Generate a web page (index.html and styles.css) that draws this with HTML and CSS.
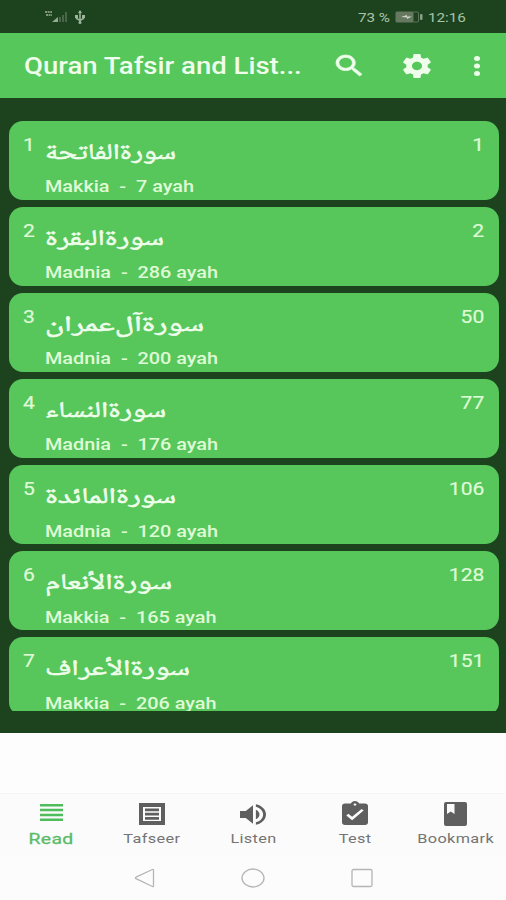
FILE: index.html
```html
<!DOCTYPE html>
<html lang="en">
<head>
<meta charset="utf-8">
<title>Quran Tafsir and Listen</title>
<link rel="stylesheet" href="styles.css">
</head>
<body>
<div class="status">
  <svg class="signal" width="44" height="16" viewBox="0 0 44 16">
    <path d="M1 3h7M2 6h6" stroke="#7f967c" stroke-width="2" stroke-dasharray="2 .6"/>
    <path d="M8 13l6-5v5z" fill="#96aa92"/>
    <path d="M16 13V8M19 13V6M22 13V3" stroke="#49664a" stroke-width="2"/>
    <path d="M36 2v12M32.500 6v3.500l3.500 2 3.500-2V6" fill="none" stroke="#9db59c" stroke-width="1.500"/>
    <path d="M36 1l2 3h-4zM31 6h3v3h-3zM38 6h3v3h-3z" fill="#9db59c"/><circle cx="36" cy="13.500" r="1.500" fill="#9db59c"/>
  </svg>
  <div class="status-right">
    <span class="pct wide">73 %</span>
    <svg class="battery" width="29" height="12" viewBox="0 0 29 12">
      <rect x=".5" y=".5" width="18" height="11" rx="1.500" fill="#66785f"/>
      <path d="M18 1h4.500q1 0 1 1v8q0 1-1 1H18" fill="none" stroke="#5d755a"/>
      <rect x="25" y="3" width="2.500" height="6" rx="1" fill="#8aa086"/>
      <path d="M6 6l6-2v1.500h5L12 8V6.500z" fill="#ccd8c8"/>
    </svg>
    <span class="clock wide">12:16</span>
  </div>
</div>
<header class="bar">
  <h1 class="wide">Quran Tafsir and List...</h1>
  <svg class="i-search" viewBox="3 3 17.500 17.500" preserveAspectRatio="none"><path d="M15.500 14h-.79l-.28-.27C15.410 12.590 16 11.110 16 9.500 16 5.910 13.090 3 9.500 3S3 5.910 3 9.500 5.910 16 9.500 16c1.610 0 3.090-.59 4.230-1.570l.27.28v.79l5 4.990L20.490 19l-4.990-5zm-6 0C7.010 14 5 11.990 5 9.500S7.010 5 9.500 5 14 7.010 14 9.500 11.990 14 9.500 14z"/></svg>
  <svg class="i-gear" viewBox="2.200 2 19.600 20" preserveAspectRatio="none"><path d="M19.430 12.980c.04-.32.07-.64.07-.98s-.03-.66-.07-.98l2.110-1.650c.19-.15.24-.42.12-.64l-2-3.460c-.12-.22-.39-.3-.61-.22l-2.490 1c-.52-.4-1.080-.73-1.690-.98l-.38-2.650C14.460 2.180 14.250 2 14 2h-4c-.25 0-.46.18-.49.42l-.38 2.650c-.61.25-1.170.59-1.690.98l-2.490-1c-.23-.09-.49 0-.61.22l-2 3.460c-.13.22-.07.49.12.64l2.110 1.650c-.04.32-.07.65-.07.98s.03.66.07.98l-2.110 1.650c-.19.15-.24.42-.12.64l2 3.460c.12.22.39.3.61.22l2.490-1c.52.4 1.080.73 1.690.98l.38 2.650c.03.24.24.42.49.42h4c.25 0 .46-.18.49-.42l.38-2.650c.61-.25 1.170-.59 1.690-.98l2.490 1c.23.09.49 0 .61-.22l2-3.460c.12-.22.07-.49-.12-.64l-2.110-1.650zM12 15.500c-1.930 0-3.500-1.570-3.500-3.500s1.570-3.500 3.500-3.500 3.500 1.570 3.500 3.500-1.570 3.500-3.500 3.500z"/></svg>
  <svg class="i-more" viewBox="10 4 4 16" preserveAspectRatio="none"><circle cx="12" cy="6" r="2"/><circle cx="12" cy="12" r="2"/><circle cx="12" cy="18" r="2"/></svg>
</header>
<main class="content">
  <div class="list">
    <article class="card"><span class="num wide">1</span><div class="info"><svg class="sura" width="131" height="38"><text x="131" y="25" textLength="131" lengthAdjust="spacingAndGlyphs">سورةالفاتحة</text></svg><span class="meta wide">Makkia&nbsp; -&nbsp; 7 ayah</span></div><span class="page wide">1</span></article>
    <article class="card"><span class="num wide">2</span><div class="info"><svg class="sura" width="119" height="38"><text x="119" y="25" textLength="119" lengthAdjust="spacingAndGlyphs">سورةالبقرة</text></svg><span class="meta wide">Madnia&nbsp; -&nbsp; 286 ayah</span></div><span class="page wide">2</span></article>
    <article class="card"><span class="num wide">3</span><div class="info"><svg class="sura" width="159" height="38"><text x="159" y="25" textLength="159" lengthAdjust="spacingAndGlyphs">سورةآل&zwnj;عمران</text></svg><span class="meta wide">Madnia&nbsp; -&nbsp; 200 ayah</span></div><span class="page wide">50</span></article>
    <article class="card"><span class="num wide">4</span><div class="info"><svg class="sura" width="121" height="38"><text x="121" y="25" textLength="121" lengthAdjust="spacingAndGlyphs">سورةالنساء</text></svg><span class="meta wide">Madnia&nbsp; -&nbsp; 176 ayah</span></div><span class="page wide">77</span></article>
    <article class="card"><span class="num wide">5</span><div class="info"><svg class="sura" width="131" height="38"><text x="131" y="25" textLength="131" lengthAdjust="spacingAndGlyphs">سورةالمائدة</text></svg><span class="meta wide">Madnia&nbsp; -&nbsp; 120 ayah</span></div><span class="page wide">106</span></article>
    <article class="card"><span class="num wide">6</span><div class="info"><svg class="sura" width="127" height="38"><text x="127" y="25" textLength="127" lengthAdjust="spacingAndGlyphs">سورةالأنعام</text></svg><span class="meta wide">Makkia&nbsp; -&nbsp; 165 ayah</span></div><span class="page wide">128</span></article>
    <article class="card"><span class="num wide">7</span><div class="info"><svg class="sura" width="145" height="38"><text x="145" y="25" textLength="145" lengthAdjust="spacingAndGlyphs">سورةالأعراف</text></svg><span class="meta wide">Makkia&nbsp; -&nbsp; 206 ayah</span></div><span class="page wide">151</span></article>
  </div>
</main>
<div class="ad"></div>
<nav class="tabs">
  <div class="tab active"><svg viewBox="4 5 16 14" preserveAspectRatio="none" class="i-read"><path d="M4 5h16v2H4zM4 9h16v2H4zM4 13h16v2H4zM4 17h16v2H4z"/></svg><span>Read</span></div>
  <div class="tab"><svg viewBox="0 0 26 22" class="i-taf"><path fill-rule="evenodd" d="M0 0h26v22H0zM4 4v14h18V4z"/><path d="M6 5.500h14v2.700H6zM6 9.700h14v2.700H6zM6 14h14v2.700H6z"/></svg><span>Tafseer</span></div>
  <div class="tab"><svg viewBox="3 3 18 18" preserveAspectRatio="none" class="i-listen"><path d="M3 9v6h4l5 5V4L7 9H3zm13.500 3c0-1.770-1.020-3.290-2.500-4.030v8.050c1.480-.73 2.500-2.250 2.500-4.020zM14 3.230v2.060c2.890.86 5 3.540 5 6.710s-2.110 5.850-5 6.710v2.060c4.010-.91 7-4.490 7-8.770s-2.990-7.860-7-8.770z"/></svg><span>Listen</span></div>
  <div class="tab"><svg viewBox="3 1 18 20" preserveAspectRatio="none" class="i-test"><path d="M19 3h-4.180C14.400 1.840 13.300 1 12 1c-1.300 0-2.400.84-2.820 2H5c-1.100 0-2 .9-2 2v14c0 1.100.9 2 2 2h14c1.100 0 2-.9 2-2V5c0-1.100-.9-2-2-2zm-7 0c.55 0 1 .45 1 1s-.45 1-1 1-1-.45-1-1 .45-1 1-1zm-2 14l-4-4 1.410-1.410L10 14.170l6.590-6.590L18 9l-8 8z"/></svg><span>Test</span></div>
  <div class="tab"><svg viewBox="0 0 23 24" class="i-book"><path fill-rule="evenodd" d="M2 0h19q2 0 2 2v20q0 2-2 2H2q-2 0-2-2V2Q0 0 2 0zM3 2v10l3.800-2.500L10.500 12V2z"/></svg><span>Bookmark</span></div>
</nav>
<footer class="sys">
  <svg width="21" height="20" viewBox="0 0 21 20"><path d="M19.500 2.200Q19.500 1 18.400 1.500L2 9.200q-1.200.7 0 1.400l16.400 7.900q1.100.4 1.100-.8z"/></svg>
  <svg width="24" height="20" viewBox="0 0 24 20"><ellipse cx="12" cy="10" rx="11" ry="9"/></svg>
  <svg width="22" height="20" viewBox="0 0 22 20"><rect x="1" y="1.500" width="20" height="17" rx="1.500"/></svg>
</footer>
</body>
</html>
```
FILE: styles.css
```css
* { box-sizing: border-box; }
body {
  margin: 0;
  width: 506px;
  height: 900px;
  overflow: hidden;
  display: flex;
  flex-direction: column;
  font-family: Roboto, "Liberation Sans", sans-serif;
  background: #fcfcfc;
}
svg { flex: none; display: block; }
.wide { display: block; transform: scaleX(1.17); transform-origin: 0 50%; white-space: pre; }

.status {
  height: 33px;
  flex: none;
  display: flex;
  justify-content: space-between;
  align-items: center;
  padding: 1px 38px 0 44px;
  background: #1c431e;
  color: #a9c3a6;
  font-size: 13px;
}
.status-right { display: flex; align-items: center; }
.pct { width: 37px; }
.battery { margin-right: 4px; }
.clock { width: 40px; }

.bar {
  height: 65px;
  flex: none;
  display: flex;
  align-items: center;
  padding: 0 26px 0 24px;
  background: #55c75b;
  fill: #effdeb;
  color: #effdeb;
}
.bar h1 { margin: 2px 0 0; width: 312px; font-size: 23px; font-weight: 500; line-height: 26px; transform: scaleX(1.196); }
.i-search { width: 26px; height: 21px; stroke: #effdeb; stroke-width: .5; overflow: visible; }
.i-gear { width: 28px; height: 24px; margin-left: 41px; }
.i-more { width: 6px; height: 20px; margin-left: auto; }

.content { height: 635px; flex: none; padding: 22.500px 7.500px 0 9px; background: #1c431e; }
.list {
  height: 590.500px;
  overflow: hidden;
  border-radius: 0 0 4px 4px;
  display: flex;
  flex-direction: column;
  gap: 7px;
}
.card {
  height: 79.150px;
  flex: none;
  display: flex;
  align-items: flex-start;
  border-radius: 14px;
  padding: 0 14px;
  background: #57c75c;
  color: #dffbd6;
}
.num { width: 22px; font-size: 18px; line-height: 22px; margin-top: 13px; -webkit-text-stroke: .2px; }
.info { flex: 1; padding-top: 13px; }
.sura { overflow: visible; }
.sura text {
  font-family: "Noto Naskh Arabic", "DejaVu Sans", sans-serif;
  font-size: 22px;
  fill: #effdeb;
  stroke: #effdeb;
  stroke-width: .6;
  direction: rtl;
}
.meta { font-size: 16px; line-height: 20px; margin-top: 5.500px; font-weight: 500; transform: scaleX(1.24); }
.page { font-size: 18px; line-height: 22px; margin-top: 13px; transform-origin: 100% 50%; -webkit-text-stroke: .2px; }

.ad { height: 60px; flex: none; background: #fdfdfd; }
.tabs {
  height: 62px;
  flex: none;
  display: grid;
  grid-template-columns: repeat(5, 101.200px);
  border-top: 1px solid #f4f4f4;
  background: #fbfbfb;
  color: #747474;
  fill: #5f5f5f;
  font-size: 13px;
}
.tab { display: flex; flex-direction: column; align-items: center; position: relative; left: .5px; }
.tab span { display: block; transform: scaleX(1.25); margin-top: auto; line-height: 18px; margin-bottom: 7px; letter-spacing: .3px; }
.tab.active { color: #5abb68; fill: #50bd5d; }
.tab.active span { font-size: 15.500px; -webkit-text-stroke: .3px; }
.i-read { width: 23px; height: 17px; margin-top: 10px; }
.i-taf { width: 26px; height: 22px; margin-top: 9px; }
.i-listen { width: 26px; height: 21px; margin-top: 10px; }
.i-test { width: 26px; height: 24px; margin-top: 7px; }
.i-book { width: 23px; height: 24px; margin-top: 8px; }

.sys {
  flex: 1;
  display: flex;
  justify-content: center;
  gap: 86px;
  padding: 13px 0 0 0;
  fill: none;
  stroke: #b5b5b5;
  stroke-width: 1.300;
}
```
